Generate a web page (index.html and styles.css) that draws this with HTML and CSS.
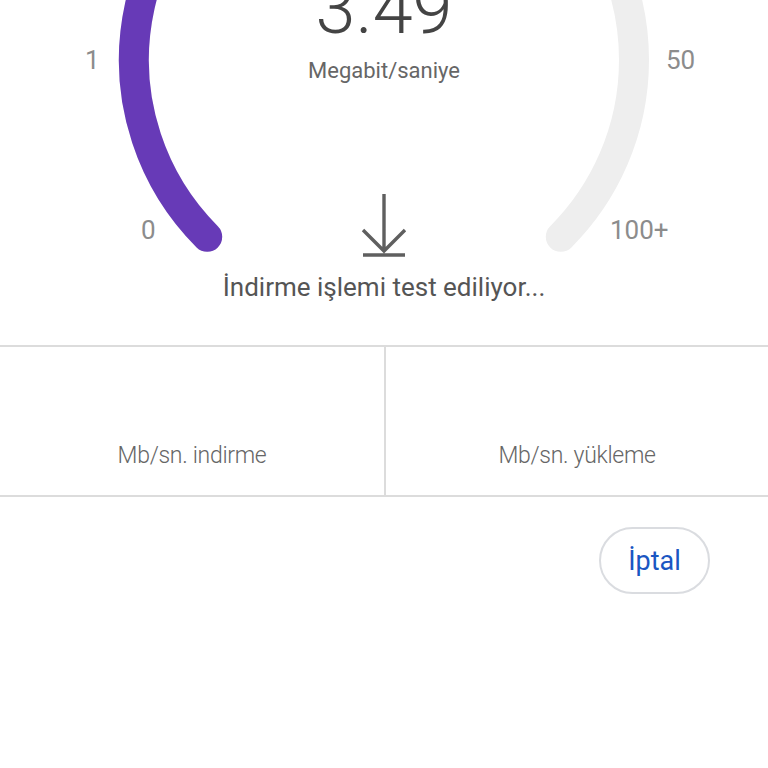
FILE: index.html
```html
<!DOCTYPE html>
<html lang="tr">
<head>
  <meta charset="UTF-8">
  <meta name="viewport" content="width=device-width, initial-scale=1">
  <title>Hız Testi</title>
  <link rel="stylesheet" href="styles.css">
</head>
<body>

  <div class="gauge">
    <svg class="dial" width="768" height="260" viewBox="0 0 768 260">
      <path d="M207.2 236.8 A250 250 0 1 1 560.8 236.8" fill="none" stroke="#eeeeee" stroke-width="30" stroke-linecap="round"/>
      <path d="M207.2 236.8 A250 250 0 0 1 298.5 -175" fill="none" stroke="#673ab7" stroke-width="30" stroke-linecap="round"/>
    </svg>

    <div class="readout">
      <div class="value">3.49</div>
      <div class="unit">Megabit/saniye</div>
    </div>

    <span class="tick tick-1">1</span>
    <span class="tick tick-50">50</span>
    <span class="tick tick-0">0</span>
    <span class="tick tick-100">100+</span>

    <svg class="dl-icon" width="48" height="66" viewBox="0 0 48 66">
      <path d="M24 1 V58 M3 37 L24 58 L45 37 M3 62 H45" fill="none" stroke="#5f5f5f" stroke-width="3.4"/>
    </svg>
  </div>

  <p class="status">İndirme işlemi test ediliyor...</p>

  <div class="results">
    <div class="result">Mb/sn. indirme</div>
    <div class="result">Mb/sn. yükleme</div>
  </div>

  <div class="actions">
    <button type="button" class="cancel-btn">İptal</button>
  </div>

</body>
</html>
```

FILE: styles.css
```css
body {
  margin: 0;
  font-family: Roboto, "Liberation Sans", sans-serif;
  background: #fff;
  color: #555;
}

.gauge {
  position: relative;
  height: 260px;
  overflow: hidden;
}

.dial {
  display: block;
}

.readout {
  position: absolute;
  top: -27px;
  left: 0;
  right: 0;
  text-align: center;
}

.value {
  font-size: 72px;
  line-height: 72px;
  font-weight: 300;
  color: #444;
}

.unit {
  margin-top: 13px;
  font-size: 22px;
  line-height: 26px;
  color: #666;
}

.tick {
  position: absolute;
  font-size: 26px;
  line-height: 30px;
  color: #8c8c8c;
}

.tick-1 { left: 85px; top: 45px; }
.tick-50 { left: 666px; top: 45px; }
.tick-0 { left: 141px; top: 215px; }
.tick-100 { left: 610px; top: 215px; }

.dl-icon {
  position: absolute;
  left: 360px;
  top: 193px;
}

.status {
  margin: 11px 0 0;
  text-align: center;
  font-size: 26px;
  line-height: 32px;
  color: #555;
}

.results {
  display: grid;
  grid-template-columns: 1fr 1fr;
  margin-top: 42px;
  height: 148px;
  border-top: 2px solid #dcdcdc;
  border-bottom: 2px solid #dcdcdc;
}

.result {
  display: flex;
  align-items: flex-end;
  justify-content: center;
  padding-bottom: 26px;
  font-size: 23px;
  font-weight: 300;
  letter-spacing: -0.3px;
  color: #666;
}

.result + .result {
  border-left: 2px solid #dcdcdc;
}

.actions {
  display: flex;
  justify-content: flex-end;
  padding: 30px 58px 0 0;
}

.cancel-btn {
  width: 111px;
  height: 67px;
  border: 2px solid #dadce0;
  border-radius: 34px;
  background: #fff;
  font-family: Roboto, "Liberation Sans", sans-serif;
  font-size: 27px;
  color: #1a56c2;
  cursor: pointer;
}
```
